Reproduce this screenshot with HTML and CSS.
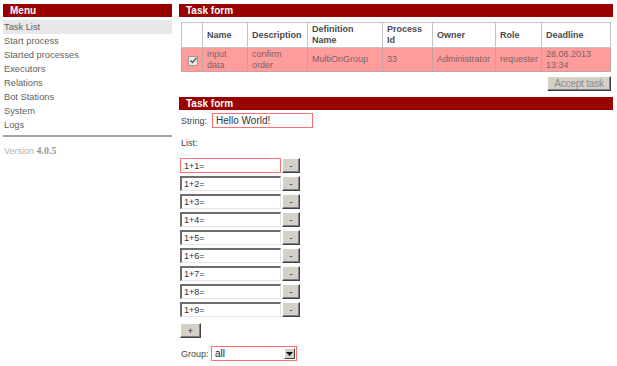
FILE: index.html
```html
<!DOCTYPE html>
<html lang="en">
<head>
  <meta charset="UTF-8" />
  <title>Task form</title>
  <link rel="stylesheet" href="styles.css">
</head>
<body>
  <div class="page">
    <div class="sidebar">
      <div class="bar">Menu</div>
      <ul class="menu">
        <li class="active">Task List</li>
        <li>Start process</li>
        <li>Started processes</li>
        <li>Executors</li>
        <li>Relations</li>
        <li>Bot Stations</li>
        <li>System</li>
        <li>Logs</li>
      </ul>
      <div class="version">Version <b>4.0.5</b></div>
    </div>

    <div class="content">
      <div class="bar">Task form</div>
      <table class="tasks">
        <thead>
          <tr>
            <th class="c-check"></th>
            <th class="c-name">Name</th>
            <th class="c-desc">Description</th>
            <th class="c-def">Definition Name</th>
            <th class="c-pid">Process Id</th>
            <th class="c-owner">Owner</th>
            <th class="c-role">Role</th>
            <th>Deadline</th>
          </tr>
        </thead>
        <tbody>
          <tr class="selected">
            <td class="c-check">
              <span class="check">
                <svg width="7" height="7" viewBox="0 0 7 7"><path d="M0.5 3.5 L2.5 5.5 L6.5 1" fill="none" stroke="#555" stroke-width="1.3"/></svg>
              </span>
            </td>
            <td>input data</td>
            <td>confirm order</td>
            <td>MultiOnGroup</td>
            <td>33</td>
            <td>Administrator</td>
            <td>requester</td>
            <td>28.06.2013 13:34</td>
          </tr>
        </tbody>
      </table>
      <div class="actions">
        <button class="btn btn-accept" disabled>Accept task</button>
      </div>

      <div class="bar bar-form">Task form</div>
      <div class="form">
        <div class="field">
          <span class="label">String:</span>
          <input class="text text-string" type="text" value="Hello World!">
        </div>
        <div class="list-label">List:</div>
        <div class="list" id="list"></div>
        <button class="btn btn-add">+</button>
        <div class="field field-group">
          <span class="label">Group:</span>
          <div class="select">
            <span class="select-value">all</span>
            <span class="select-arrow">
              <svg width="7" height="4" viewBox="0 0 7 4"><path d="M0 0 H7 L3.5 4 Z" fill="#000"/></svg>
            </span>
          </div>
        </div>
      </div>
    </div>
  </div>

  <script>
    const list = document.getElementById("list");
    for (let i = 1; i <= 9; i++) {
      const row = document.createElement("div");
      row.className = "list-row";
      row.innerHTML = `
        <input class="text ${i === 1 ? "text-error" : ""}" type="text" value="1+${i}=">
        <button class="btn btn-remove">-</button>
      `;
      list.appendChild(row);
    }
  </script>
</body>
</html>
```

FILE: styles.css
```css
body {
  font-family: "Liberation Sans", Arial, sans-serif;
  font-size: 9px;
  color: #555;
  background-color: #fff;
  margin: 0;
  padding: 0;
}
.page {
  display: flex;
  padding-top: 4px;
}
.sidebar {
  width: 169px;
  margin-left: 3px;
}
.content {
  flex: 1;
  margin-left: 7px;
  margin-right: 4px;
}
.bar {
  height: 13px;
  line-height: 13px;
  background-color: #990000;
  color: #fff;
  font-size: 10px;
  font-weight: bold;
  padding-left: 7px;
}
.menu {
  list-style: none;
  margin: 3px 0 0;
  padding: 0;
  border-bottom: 2px solid #a5a5a5;
  padding-bottom: 3px;
}
.menu li {
  height: 14px;
  line-height: 14px;
  padding-left: 1px;
  color: #5f5f5f;
  font-size: 9.3px;
}
.menu li.active {
  background-color: #e8e8e8;
}
.version {
  margin-top: 8px;
  padding-left: 1px;
  color: #b0b0b0;
  line-height: 12px;
}
.version b {
  font-family: "Liberation Serif", serif;
  font-size: 10px;
  color: #999;
}
.tasks {
  margin: 5px 2px 0;
  width: 430px;
  border-collapse: collapse;
  table-layout: fixed;
}
.tasks th, .tasks td {
  border: 1px solid #c4c4c4;
  text-align: left;
  padding: 0 3px 0 4px;
  line-height: 11px;
  overflow: hidden;
}
.tasks th {
  height: 24px;
  color: #4a4a4a;
  font-weight: bold;
}
.tasks td {
  height: 23px;
  color: #7a6262;
}
.tasks tr.selected td {
  background-color: #ff9d9d;
  border-color: #c9a0a0;
}
.c-check { width: 13px; }
.c-name { width: 37px; }
.c-desc { width: 52px; }
.c-def { width: 67px; }
.c-pid { width: 42px; }
.c-owner { width: 55px; }
.c-role { width: 38px; }
.tasks td.c-check {
  padding-left: 6px;
}
.check {
  display: flex;
  align-items: center;
  justify-content: center;
  width: 8px;
  height: 8px;
  border: 1px solid #999;
  background-color: #ebebeb;
  margin-top: 2px;
}
.actions {
  display: flex;
  justify-content: flex-end;
  margin: 4px 2px 0;
}
.btn {
  font-family: "Liberation Sans", Arial, sans-serif;
  font-size: 9px;
  background-color: #d4d0c8;
  color: #222;
  border-top: 1px solid #fff;
  border-left: 1px solid #fff;
  border-right: 1px solid #404040;
  border-bottom: 1px solid #404040;
  box-shadow: inset -1px -1px 0 #808080;
  padding: 0;
  margin: 0;
  cursor: pointer;
}
.btn-accept {
  width: 64px;
  height: 15px;
  font-size: 10px;
  color: #8a8a8a;
  letter-spacing: -0.2px;
}
.bar-form {
  margin-top: 6px;
}
.form {
  padding-left: 1px;
}
.field {
  display: flex;
  align-items: center;
  margin-top: 3px;
}
.label {
  width: 32px;
  padding-left: 1px;
  color: #444;
}
.text {
  box-sizing: border-box;
  width: 101px;
  height: 15px;
  margin: 0;
  padding: 0 2px;
  font-family: "Liberation Sans", Arial, sans-serif;
  font-size: 9px;
  color: #333;
  background-color: #fff;
  border-top: 2px solid #6e6e6e;
  border-left: 2px solid #6e6e6e;
  border-right: 1px solid #e4e4e4;
  border-bottom: 1px solid #e4e4e4;
  outline: none;
}
.field .text-string,
.list-row .text-error {
  border-top: 1px solid #ff7070;
  border-left: 1px solid #ff7070;
  border-right: 1px solid #ff7070;
  border-bottom: 1px solid #ff7070;
  padding-left: 3px;
}
.field .text-string {
  width: 101px;
  font-size: 10px;
  margin-left: -1px;
}
.list-label {
  margin-top: 10px;
  height: 11px;
  line-height: 11px;
  padding-left: 1px;
  color: #444;
}
.list {
  margin-top: 9px;
}
.list-row {
  display: flex;
  gap: 1px;
  margin-bottom: 3px;
}
.btn-remove {
  width: 18px;
  height: 15px;
}
.btn-add {
  width: 21px;
  height: 15px;
  margin-top: 3px;
}
.field-group {
  margin-top: 8px;
}
.field-group .label {
  width: 30px;
}
.select {
  box-sizing: border-box;
  display: flex;
  align-items: center;
  justify-content: space-between;
  width: 86px;
  height: 15px;
  border: 1px solid #ff6a6a;
  background-color: #fff;
  padding: 1px 1px 1px 3px;
}
.select-value {
  font-size: 10px;
  color: #222;
}
.select-arrow {
  display: flex;
  align-items: center;
  justify-content: center;
  box-sizing: border-box;
  width: 11px;
  height: 11px;
  background-color: #d4d0c8;
  border-top: 1px solid #fff;
  border-left: 1px solid #fff;
  border-right: 1px solid #404040;
  border-bottom: 1px solid #404040;
}
```
